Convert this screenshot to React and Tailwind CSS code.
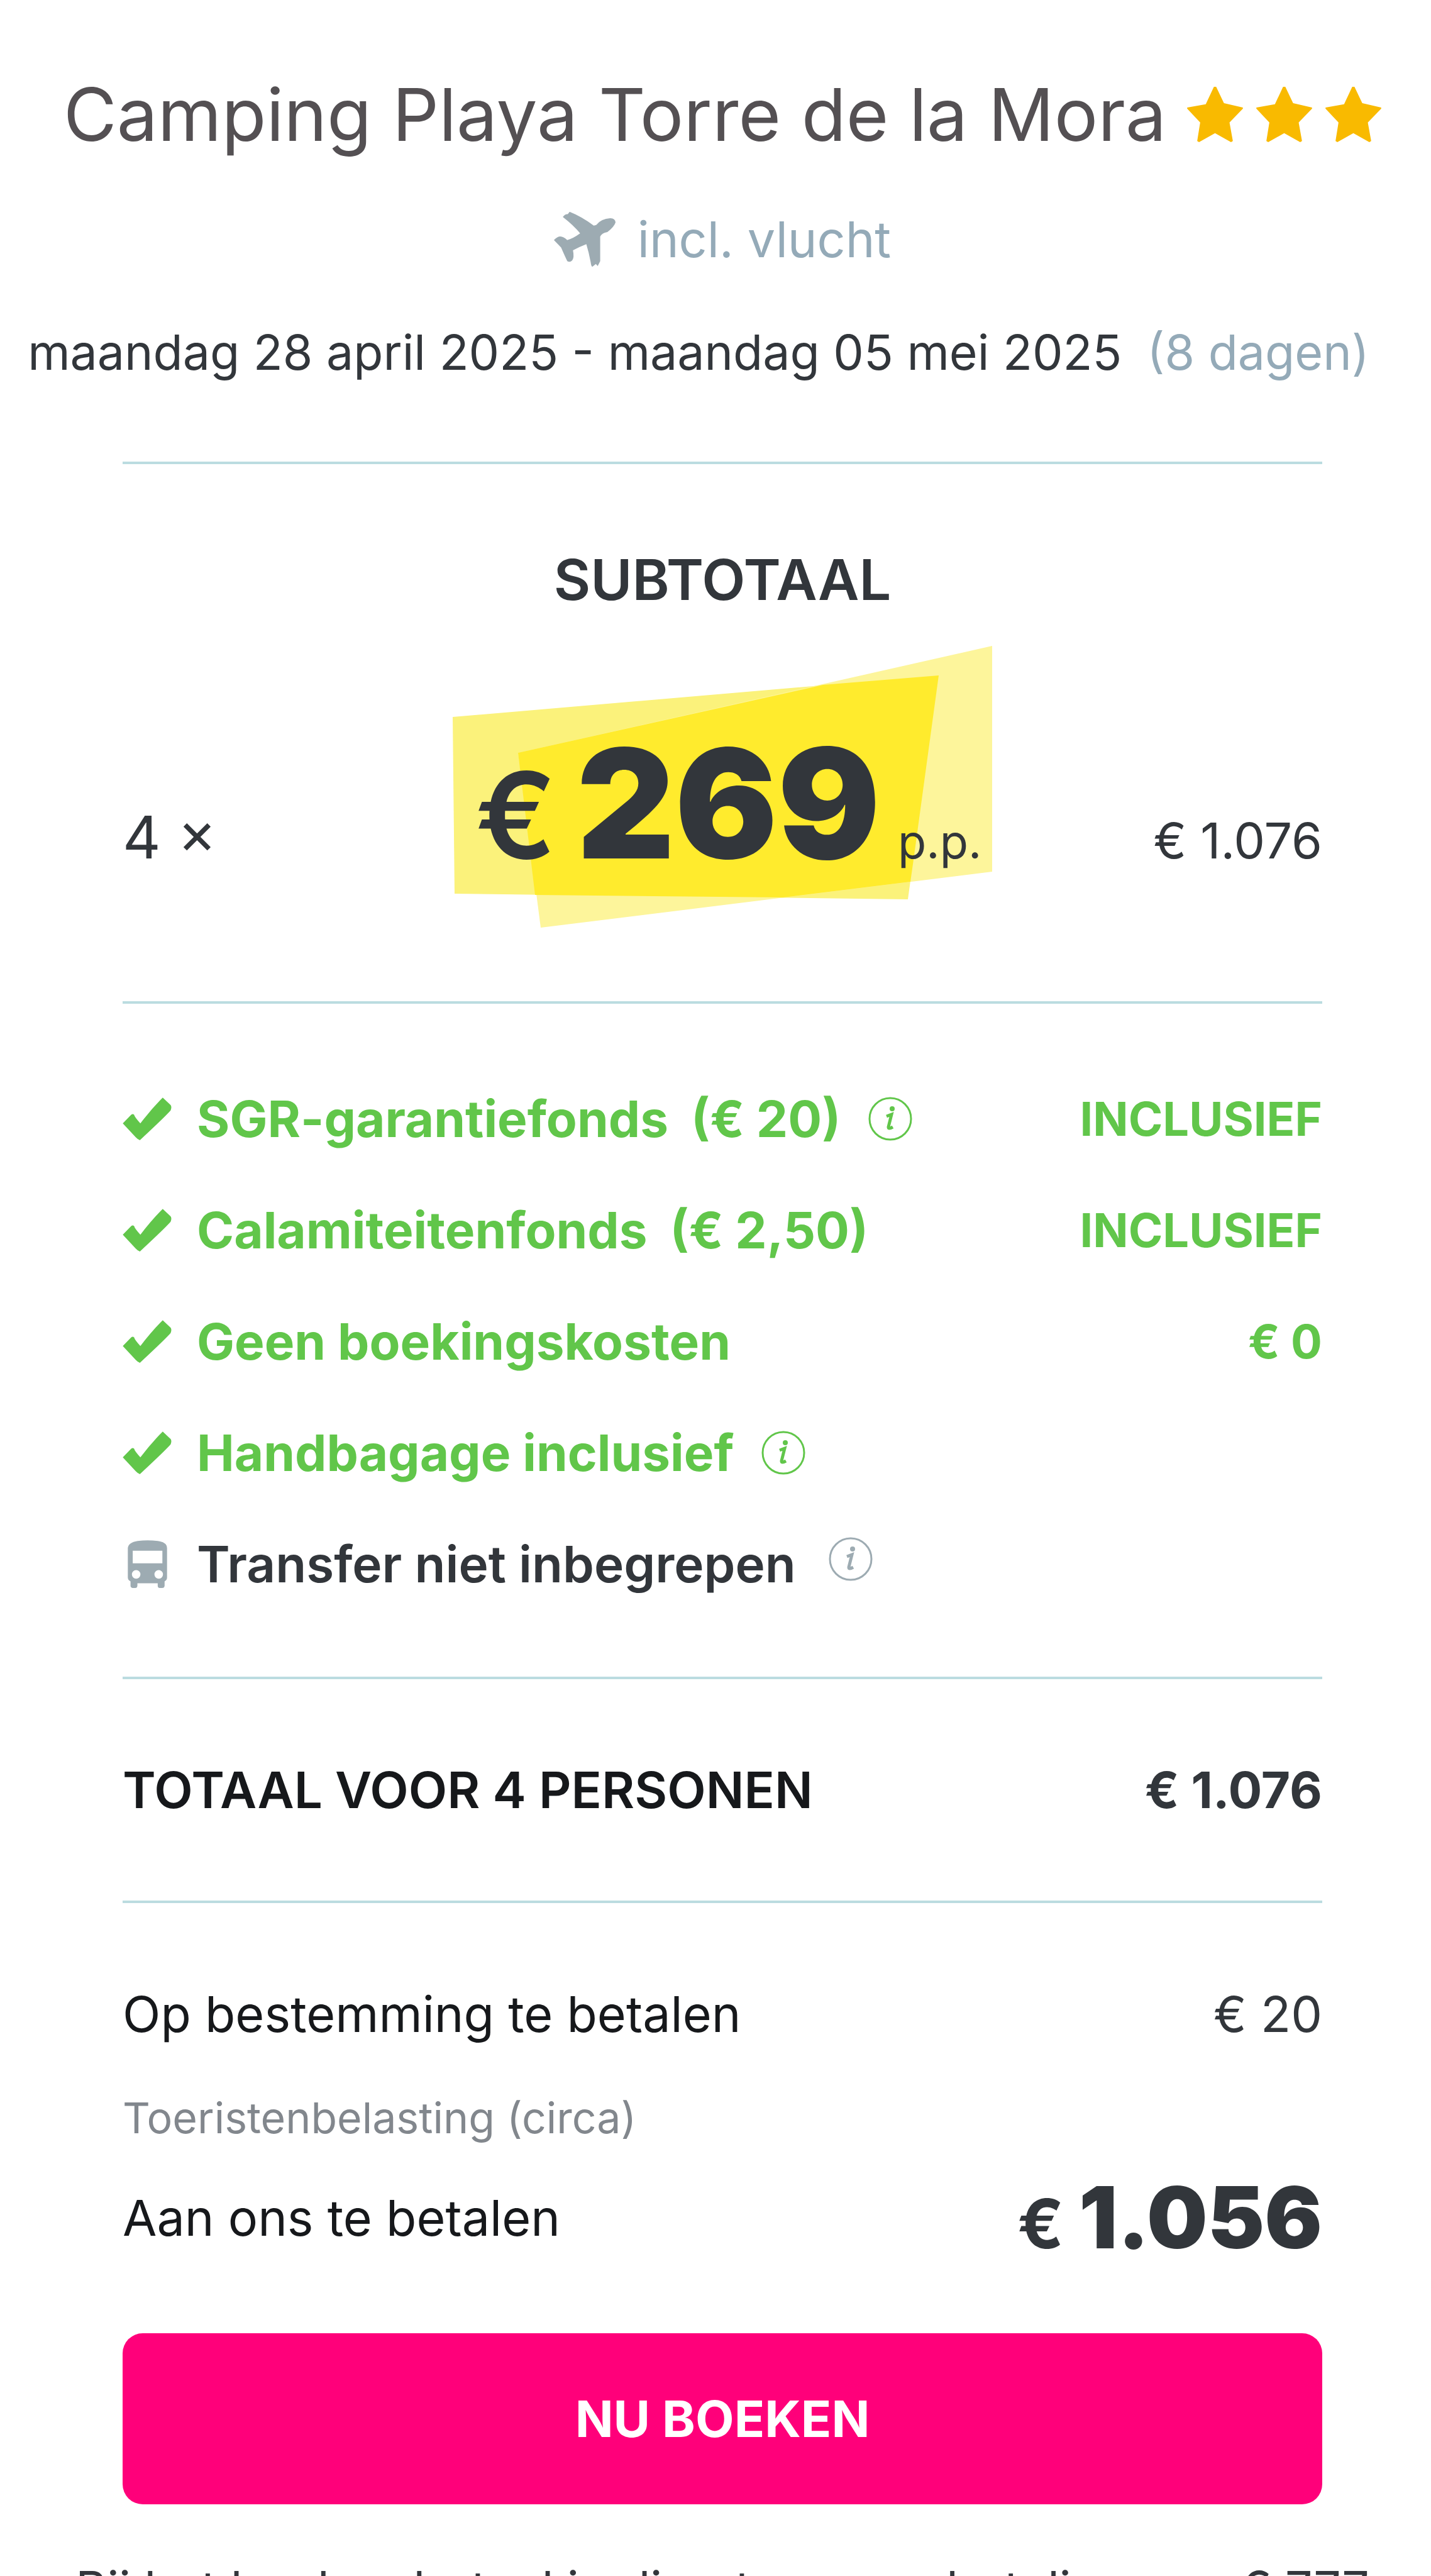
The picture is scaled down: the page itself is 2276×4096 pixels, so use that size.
const inclusions = [
  { label: 'SGR-garantiefonds', price: '(€ 20)', info: true, amount: 'INCLUSIEF' },
  { label: 'Calamiteitenfonds', price: '(€ 2,50)', amount: 'INCLUSIEF' },
  { label: 'Geen boekingskosten', amount: '€ 0' },
  { label: 'Handbagage inclusief', info: true },
];

function Star() {
  return (
    <svg viewBox="0 0 150 149" className="w-[89px] h-[88px]" fill="#F9BA00" aria-hidden="true">
      <path d="M72 0h6l21 44 51 12v3l-36 37 9 50-5 3-43-24-43 24-5-3 8-50L0 59v-3l50-9z" />
    </svg>
  );
}

function Plane() {
  return (
    <svg viewBox="258 122 498 448" className="w-[98px] h-[89px]" fill="#9DABB2" aria-hidden="true">
      <path d="M330 165Q350 140 370 143L385 124Q480 162 580 235L600 230Q640 180 712 176Q752 174 756 210Q745 245 690 288Q645 296 632 325V522L612 562L597 545L568 568Q558 560 555 530Q540 450 520 385Q460 408 412 435Q424 495 406 516Q388 536 366 522Q350 490 316 412L258 352Q290 318 318 324Q345 330 365 352Q410 342 470 298Q420 235 330 165Z" />
    </svg>
  );
}

function Check() {
  return (
    <svg viewBox="84 114 398 348" className="w-[78px] h-[68px]" fill="#61C64A" aria-hidden="true">
      <path d="M85 325L152 256Q166 244 178 256Q180 272 228 325Q320 205 410 115L474 176Q486 192 474 220Q410 290 224 462Q204 454 190 438Z" />
    </svg>
  );
}

function Bus() {
  return (
    <svg viewBox="120 226 320 390" className="w-[63px] h-[76px]" fill="#9DABB2" aria-hidden="true">
      <path
        fillRule="evenodd"
        d="M200 232Q280 222 365 232Q440 242 440 290V530Q440 552 420 562V598Q418 616 400 616H380Q364 614 364 598V578H198V598Q196 616 180 616H158Q142 612 142 598V562Q120 552 120 530V290Q124 244 200 232ZM160 312V414H402V312ZM188 470A34 34 0 1 0 188 540A34 34 0 1 0 188 470ZM372 470A34 34 0 1 0 372 540A34 34 0 1 0 372 470Z"
      />
    </svg>
  );
}

function Info({ className }) {
  return (
    <button type="button" aria-label="Meer informatie" className={className}>
      <svg viewBox="0 0 70 70" className="w-[70px] h-[70px]" fill="none" stroke="currentColor" aria-hidden="true">
        <circle cx="35" cy="35" r="33" strokeWidth="3" />
        <path d="M29 31l8-3-5 20q0 4 7 0" strokeWidth="5" />
        <circle cx="38" cy="19" r="4" fill="currentColor" stroke="none" />
      </svg>
    </button>
  );
}

export default function App() {
  return (
    <main className="min-h-screen bg-white pl-[22px] pt-[112px] font-['Inter',sans-serif] text-[79px] leading-[100px] text-[#32363B]">

      {/* Header */}
      <header className="text-[77px]">
        <div className="flex items-center justify-center gap-[33px] whitespace-nowrap">
          <h1 className="text-[116px] leading-[140px] text-[#545053]">Camping Playa Torre de la Mora</h1>
          <div className="flex gap-[21px]" role="img" aria-label="3 sterren">
            <Star />
            <Star />
            <Star />
          </div>
        </div>
        <p className="mt-[78px] flex items-center justify-center gap-[35px] text-[79px] text-[#94AAB8]">
          <Plane />
          incl. vlucht
        </p>
        <p className="mt-20 flex justify-center gap-10 whitespace-nowrap pr-[76px]">
          maandag 28 april 2025 - maandag 05 mei 2025
          <span className="text-[#94AAB8]">(8 dagen)</span>
        </p>
      </header>

      <div className="px-[173px]">
        {/* Subtotal */}
        <section className="mt-[124px] border-y-4 border-[#BBDCE0] pt-[124px] pb-[117px]">
          <h2 className="text-center text-[90px] leading-[120px] font-semibold">SUBTOTAAL</h2>
          <div className="mt-[45px] flex items-baseline justify-between">
            <span className="flex-1 text-[94px]">4 ×</span>
            <div className="relative flex h-[448px] w-[858px] items-baseline pt-[129px] pl-[36px]">
              <svg viewBox="0 0 858 448" className="absolute inset-0 h-full w-full" aria-hidden="true">
                <path d="M0 113L773 47 724 403 3 394z" fill="#FBF27B" />
                <path d="M104 170L858 0V359L140 448z" fill="#FDF59B" />
                <path d="M104 170L589 62 773 47 733 340 728 375 526 400 131 396z" fill="#FFEB2D" />
              </svg>
              <span className="relative text-[190px] leading-none font-semibold">€</span>
              <span className="relative ml-8 text-[242px] leading-none font-black">269</span>
              <span className="relative ml-7 text-[74px]">p.p.</span>
            </div>
            <span className="flex-1 text-right">€ 1.076</span>
          </div>
        </section>

        {/* Inclusions */}
        <ul className="border-b-4 border-[#BBDCE0] pt-[94px] pb-[91px] text-[80px] font-bold">
          {inclusions.map(({ label, price, info, amount }) => (
            <li key={label} className="flex h-[177px] items-center text-[#61C64A]">
              <Check />
              <span className="ml-10">{label}</span>
              {price && <span className="ml-9">{price}</span>}
              {info && <Info className="ml-11 text-[#61C64A]" />}
              <span className="ml-auto text-[74px]">{amount}</span>
            </li>
          ))}
          <li className="flex h-[177px] items-center">
            <span className="flex w-[78px] justify-center">
              <Bus />
            </span>
            <span className="ml-10 font-semibold">Transfer niet inbegrepen</span>
            <Info className="ml-[52px] pb-4 text-[#9DABB2]" />
          </li>
        </ul>

        {/* Total */}
        <section className="flex h-[356px] items-center justify-between border-b-4 border-[#BBDCE0] text-[80px]">
          <span className="font-semibold text-[#16181B]">TOTAAL VOOR 4 PERSONEN</span>
          <span className="font-bold">€ 1.076</span>
        </section>

        {/* Payment */}
        <section className="pt-[116px]">
          <div className="flex justify-between leading-[120px]">
            <span className="text-[#16181B]">Op bestemming te betalen</span>
            <span>€ 20</span>
          </div>
          <p className="mt-[55px] text-[68px] text-[#82878D]">Toeristenbelasting (circa)</p>
          <div className="mt-[39px] flex h-[140px] items-center justify-between">
            <span className="text-[#16181B]">Aan ons te betalen</span>
            <span className="flex items-baseline gap-6">
              <span className="text-[108px] font-bold">€</span>
              <span className="text-[136px] leading-[140px] font-black">1.056</span>
            </span>
          </div>
          <button type="button" className="mt-[114px] h-[272px] w-full rounded-[32px] bg-[#FF007A] text-[80px] font-bold text-white">
            NU BOEKEN
          </button>
        </section>
      </div>

      <p className="mt-[84px] h-[30px] overflow-hidden text-center text-[77px] whitespace-nowrap">
        Bij het boeken betaal je direct een aanbetaling van € 777
      </p>
    </main>
  );
}
